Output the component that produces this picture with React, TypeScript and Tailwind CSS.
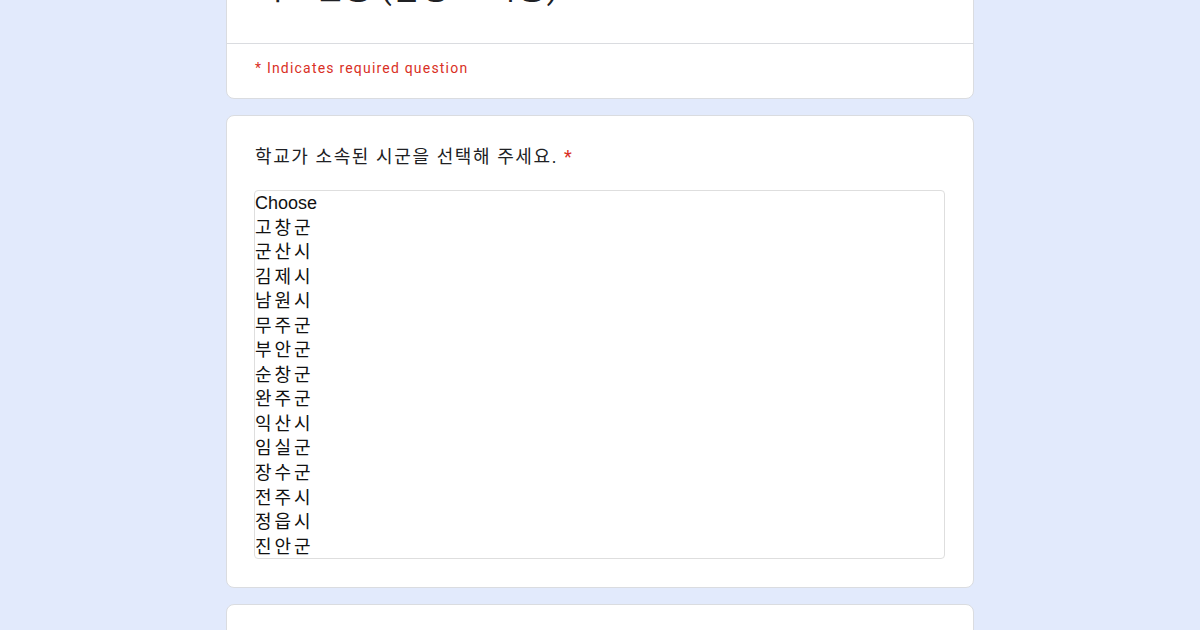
import React from 'react';

const regions = [
  '고창군', '군산시', '김제시', '남원시', '무주군', '부안군', '순창군',
  '완주군', '익산시', '임실군', '장수군', '전주시', '정읍시', '진안군',
];

const App = () => {
  return (
    <div className="h-[630px] overflow-hidden bg-[#e2eafc] font-['Roboto','Noto_Sans_CJK_KR',sans-serif]">
      <div className="mx-auto w-[748px] -mt-[57px] flex flex-col gap-4">
        {/* Header card */}
        <div className="bg-white border border-[#dadce0] rounded-lg">
          <div className="h-[100px] px-[28px] pt-[24px] border-b border-[#dadce0]">
            <h1 className="text-[32px] leading-[40px] text-[#202124] whitespace-nowrap">
              학교현황 (담당 교사용)
            </h1>
          </div>
          <div className="px-[28px] pt-[14px] pb-[20px]">
            <p className="text-[14px] leading-5 text-[#d93025] tracking-[1.2px]">
              * Indicates required question
            </p>
          </div>
        </div>

        {/* Question card */}
        <div className="bg-white border border-[#dadce0] rounded-lg px-[28px] pt-[29px] pb-[28px]">
          <p className="text-[18px] leading-6 text-[#202124] tracking-[1.6px]">
            학교가 소속된 시군을 선택해 주세요. <span className="text-[#d93025]">*</span>
          </p>
          <div className="mt-[21px] -ml-px h-[369px] overflow-hidden border border-[#dedede] rounded-[4px] font-['Liberation_Sans','Noto_Sans_CJK_KR',sans-serif] text-[18px] leading-[24.55px] text-[#111]">
            <div>Choose</div>
            {regions.map((r) => (
              <div key={r} className="tracking-[3px]">{r}</div>
            ))}
          </div>
        </div>

        {/* Next card */}
        <div className="bg-white border border-[#dadce0] rounded-lg h-[120px]" />
      </div>
    </div>
  );
};

export default App;
